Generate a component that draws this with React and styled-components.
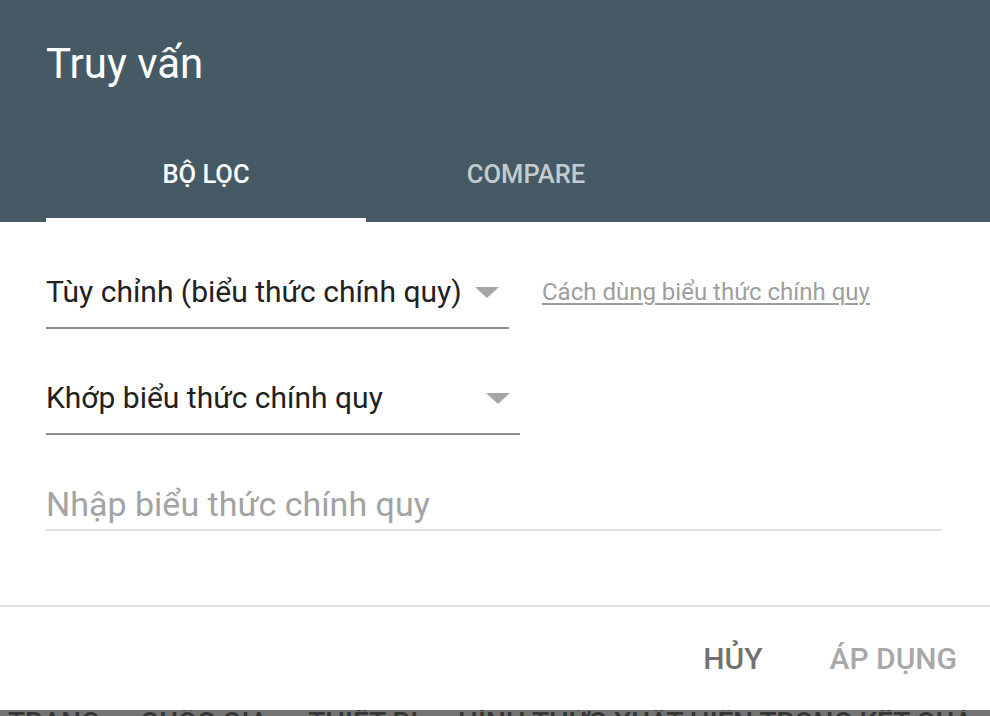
import React from "react";
import styled, { createGlobalStyle } from "styled-components";

const Global = createGlobalStyle`
  html, body { margin: 0; padding: 0; background: #ffffff; }
  body { font-family: Roboto, "Noto Sans", Arial, sans-serif; }
  * { box-sizing: border-box; }
`;

const Page = styled.div`
  width: 990px;
  height: 716px;
  display: flex;
  flex-direction: column;
  overflow: hidden;
  background: #737373;
`;

const Dialog = styled.div`
  display: flex;
  flex-direction: column;
  background: #fff;
  flex: 0 0 710px;
`;

const Header = styled.header`
  background: #465a65;
  padding: 0 0 0 46px;
  display: flex;
  flex-direction: column;
`;

const Title = styled.h1`
  margin: 0;
  height: 126px;
  display: flex;
  align-items: center;
  color: #fff;
  font-size: 42px;
  font-weight: 400;
`;

const Tabs = styled.div`
  display: flex;
  height: 96px;
`;

const Tab = styled.div`
  width: 320px;
  display: flex;
  align-items: center;
  justify-content: center;
  font-size: 25.5px;
  font-weight: 500;
  color: ${(p) => (p.$active ? "#ffffff" : "rgba(255,255,255,0.7)")};
  border-bottom: 4px solid ${(p) => (p.$active ? "#ffffff" : "transparent")};
  padding-top: 4px;
`;

const Content = styled.div`
  padding: 50px 48px 74px 46px;
  display: flex;
  flex-direction: column;
  gap: 49px;
  border-bottom: 2px solid #e3e3e3;
`;

const Row = styled.div`
  display: flex;
  align-items: flex-start;
  gap: 33px;
`;

const Select = styled.div`
  width: ${(p) => p.$width}px;
  display: flex;
  align-items: center;
  justify-content: space-between;
  padding: 0 ${(p) => p.$pad}px 15px 0;
  border-bottom: 2px solid #8d8d8d;
`;

const SelectText = styled.span`
  font-size: 30px;
  line-height: 40px;
  color: #212121;
`;

const Arrow = styled.svg`
  width: 24px;
  height: 11px;
  flex: none;
`;

const HelpLink = styled.a`
  font-size: 24px;
  line-height: 40px;
  color: #9e9e9e;
  text-decoration: underline;
  text-underline-offset: 3px;
  text-decoration-thickness: 1.5px;
`;

const InputField = styled.div`
  padding: 0 0 5px 0;
  border-bottom: 2px solid #e0e0e0;
`;

const Placeholder = styled.span`
  font-size: 34px;
  line-height: 40px;
  color: #a3a3a3;
`;

const Footer = styled.div`
  flex: 1;
  display: flex;
  align-items: center;
  justify-content: flex-end;
  padding: 0 17px 0 0;
  gap: 35px;
`;

const ActionButton = styled.button`
  background: none;
  border: none;
  padding: 8px 16px;
  font-family: Roboto, Arial, sans-serif;
  font-size: 30px;
  font-weight: 500;
  color: ${(p) => (p.disabled ? "#a8a8a8" : "#717171")};
`;

const Behind = styled.div`
  flex: 1;
  background: #737373;
  overflow: hidden;
  display: flex;
  gap: 40px;
  padding-left: 8px;
  white-space: nowrap;
`;

const BehindLabel = styled.span`
  font-size: 28px;
  font-weight: 500;
  color: #363636;
  line-height: 1;
  margin-top: -1px;
`;

function Caret() {
  return (
    <Arrow viewBox="0 0 24 11">
      <path d="M0 0 L24 0 L12 11 Z" fill="#a6a6a6" />
    </Arrow>
  );
}

export default function App() {
  return (
    <>
      <Global />
      <Page>
        <Dialog>
          <Header>
            <Title>Truy vấn</Title>
            <Tabs>
              <Tab $active>BỘ LỌC</Tab>
              <Tab>COMPARE</Tab>
            </Tabs>
          </Header>
          <Content>
            <Row>
              <Select $width={463} $pad={10}>
                <SelectText>Tùy chỉnh (biểu thức chính quy)</SelectText>
                <Caret />
              </Select>
              <HelpLink href="#">Cách dùng biểu thức chính quy</HelpLink>
            </Row>
            <Row>
              <Select $width={474} $pad={10}>
                <SelectText>Khớp biểu thức chính quy</SelectText>
                <Caret />
              </Select>
            </Row>
            <InputField>
              <Placeholder>Nhập biểu thức chính quy</Placeholder>
            </InputField>
          </Content>
          <Footer>
            <ActionButton>HỦY</ActionButton>
            <ActionButton disabled>ÁP DỤNG</ActionButton>
          </Footer>
        </Dialog>
        <Behind>
          <BehindLabel>TRANG</BehindLabel>
          <BehindLabel>QUỐC GIA</BehindLabel>
          <BehindLabel>THIẾT BỊ</BehindLabel>
          <BehindLabel>HÌNH THỨC XUẤT HIỆN TRONG KẾT QUẢ</BehindLabel>
        </Behind>
      </Page>
    </>
  );
}
